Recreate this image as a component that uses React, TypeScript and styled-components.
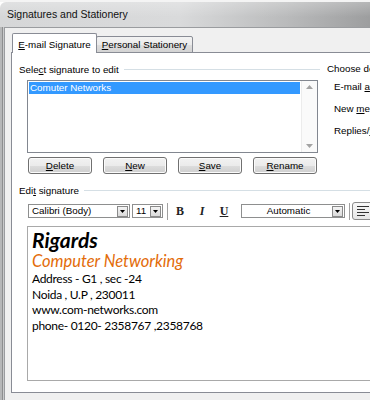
import React from 'react'
import styled, { createGlobalStyle } from 'styled-components'

const uiFont = `"Liberation Sans", Arial, sans-serif`
const docFont = `Lato, "Open Sans", sans-serif`
const serifFont = `"Liberation Serif", "DejaVu Serif", serif`

const GlobalStyle = createGlobalStyle`
  html, body {
    margin: 0;
    padding: 0;
  }
  body {
    width: 370px;
    height: 400px;
    overflow: hidden;
    background: #ffffff;
  }
  * {
    box-sizing: border-box;
  }
`

const Screen = styled.div`
  width: 370px;
  height: 400px;
  overflow: hidden;
  display: flex;
  flex-direction: column;
  font-family: ${uiFont};
  font-size: 9.8px;
  color: #000;
`

const Backdrop = styled.div`
  height: 2px;
  flex: none;
  background: #f4f4f4;
`

const Window = styled.div`
  flex: 1;
  width: 600px;
  display: flex;
  flex-direction: column;
`

const TitleBar = styled.div`
  height: 25px;
  flex: none;
  padding-left: 7px;
  line-height: 25px;
  font-size: 10.5px;
  color: #111;
  border-radius: 6px 0 0 0;
  background:
    linear-gradient(180deg, rgba(255, 255, 255, 0.25), rgba(255, 255, 255, 0) 60%),
    linear-gradient(90deg, #d6d7d8 0%, #d9dadb 30%, #b9babb 48%, #9c9d9e 62%, #939495 80%, #a9aaab 100%);
`

const FrameRow = styled.div`
  flex: 1;
  display: flex;
  background: #c4c5c6;
`

const SideFrame = styled.div`
  width: 4px;
  flex: none;
  background: linear-gradient(90deg, #b6b7b8 0, #b6b7b8 2px, #8d8e8f 2px, #8d8e8f 3px, #c9cacb 3px);
`

const Client = styled.div`
  flex: 1;
  display: flex;
  flex-direction: column;
  background: #f0f0f0;
  border-top: 1px solid #9a9c9f;
  border-left: 1px solid #9a9c9f;
  padding: 5px 0 7px 6px;
`

const TabStrip = styled.div`
  display: flex;
  align-items: flex-end;
  height: 20px;
  flex: none;
  position: relative;
  z-index: 1;
  margin-bottom: -1px;
  padding-left: 1px;
`

const Tab = styled.div<{ $active?: boolean; $width: number }>`
  width: ${(p) => p.$width}px;
  height: ${(p) => (p.$active ? 20 : 17)}px;
  margin-left: ${(p) => (p.$active ? 0 : -1)}px;
  border: 1px solid #898c95;
  border-bottom: ${(p) => (p.$active ? 'none' : '1px solid #898c95')};
  border-radius: 2px 2px 0 0;
  background: ${(p) =>
    p.$active ? '#ffffff' : 'linear-gradient(180deg, #f3f3f3, #ebebeb 50%, #dedede 51%, #d3d3d3)'};
  text-align: center;
  line-height: ${(p) => (p.$active ? 22 : 16)}px;
  white-space: nowrap;
`

const Panel = styled.div`
  flex: 1;
  display: flex;
  flex-direction: column;
  background: #ffffff;
  border: 1px solid #898c95;
  padding: 9px 0 0 7px;
`

const TopSection = styled.div`
  display: flex;
  gap: 7px;
`

const LeftCol = styled.div`
  width: 301px;
  flex: none;
`

const GroupHeader = styled.div`
  display: flex;
  align-items: center;
  height: 14px;
  white-space: nowrap;

  &::after {
    content: '';
    flex: 1;
    height: 1px;
    margin-left: 5px;
    background: #d5dfe5;
  }
`

const Key = styled.span`
  text-decoration: underline;
`

const ListBox = styled.div`
  display: flex;
  width: 291px;
  height: 73px;
  margin: 4px 0 0 8px;
  border: 1px solid #828790;
  background: #fff;
`

const ListItems = styled.div`
  flex: 1;
  padding: 1px 1px 0 1px;
`

const ListItem = styled.div<{ $selected?: boolean }>`
  height: 12px;
  line-height: 12px;
  padding-left: 1px;
  white-space: nowrap;
  background: ${(p) => (p.$selected ? '#3399ff' : 'transparent')};
  color: ${(p) => (p.$selected ? '#ffffff' : '#000')};
`

const ScrollBar = styled.div`
  width: 16px;
  flex: none;
  display: flex;
  flex-direction: column;
  justify-content: space-between;
  align-items: center;
  padding: 4px 0 4px;
  background: #fafafa;
  border-left: 1px solid #ececec;
`

const ButtonRow = styled.div`
  display: flex;
  gap: 11px;
  margin: 4px 0 0 9px;
`

const PushButton = styled.button`
  width: 64px;
  height: 17px;
  padding: 0;
  border: 1px solid #707070;
  border-radius: 3px;
  background: linear-gradient(180deg, #f2f2f2, #ebebeb 50%, #dddddd 51%, #cfcfcf);
  box-shadow: inset 0 0 0 1px #fbfbfb;
  font-family: ${uiFont};
  font-size: 9.8px;
  line-height: 14px;
  color: #000;
`

const RightCol = styled.div`
  flex: 1;
  white-space: nowrap;
`

const RightHeading = styled.div`
  height: 14px;
  line-height: 14px;
`

const RightRow = styled.div<{ $first?: boolean }>`
  height: 14px;
  line-height: 14px;
  padding-left: 7px;
  margin-top: ${(p) => (p.$first ? 4 : 8)}px;
`

const EditSection = styled.div`
  margin-top: 9px;
  display: flex;
  flex-direction: column;
`

const Toolbar = styled.div`
  display: flex;
  align-items: center;
  height: 18px;
  margin: 5px 0 0 9px;
`

const Combo = styled.div<{ $width: number; $gap?: number }>`
  width: ${(p) => p.$width}px;
  height: 14px;
  margin-left: ${(p) => p.$gap ?? 0}px;
  flex: none;
  display: flex;
  align-items: center;
  border: 1px solid #8e8f8f;
  background: #fff;
  padding-left: 3px;
  font-size: 9.8px;
  white-space: nowrap;
`

const ComboText = styled.span<{ $center?: boolean }>`
  flex: 1;
  text-align: ${(p) => (p.$center ? 'center' : 'left')};
  line-height: 12px;
`

const DropButton = styled.span`
  width: 11px;
  height: 11px;
  margin-right: 1px;
  flex: none;
  display: flex;
  align-items: center;
  justify-content: center;
  border: 1px solid #8a8a8a;
  background: linear-gradient(180deg, #f4f4f4, #dadada);
`

const Separator = styled.span<{ $gap: number }>`
  width: 2px;
  height: 17px;
  flex: none;
  margin-left: ${(p) => p.$gap}px;
  border-left: 1px solid #a0a0a0;
  border-right: 1px solid #ffffff;
`

const FormatButton = styled.span<{ $kind: 'b' | 'i' | 'u' }>`
  width: 22px;
  height: 18px;
  flex: none;
  text-align: center;
  line-height: 18px;
  font-family: ${serifFont};
  font-size: 12px;
  font-weight: bold;
  font-style: ${(p) => (p.$kind === 'i' ? 'italic' : 'normal')};
  text-decoration: ${(p) => (p.$kind === 'u' ? 'underline' : 'none')};
  color: #222;
`

const AlignButton = styled.span`
  width: 22px;
  height: 18px;
  flex: none;
  margin-left: 1px;
  display: flex;
  align-items: center;
  justify-content: center;
  border: 1px solid #8a8a8a;
  border-radius: 3px;
  background: linear-gradient(180deg, #f8f8f8, #e6e6e6);
`

const Editor = styled.div`
  height: 155px;
  margin: 6px 0 0 8px;
  border: 1px solid #a9a9a9;
  border-right: none;
  background: #ffffff;
  padding: 1px 4px;
  font-family: ${docFont};
  color: #000;
`

const SigName = styled.div`
  font-size: 21px;
  font-weight: bold;
  font-style: italic;
  line-height: 24px;
`

const SigCompany = styled.div`
  font-size: 16.5px;
  font-style: italic;
  color: #e36c0a;
  line-height: 19px;
`

const SigLine = styled.div`
  font-size: 12px;
  letter-spacing: -0.3px;
  line-height: 15.7px;
`

const Triangle = ({ up }: { up?: boolean }) => (
  <svg width="7" height="4" viewBox="0 0 7 4">
    <path d={up ? 'M0 4 L3.5 0 L7 4 Z' : 'M0 0 L7 0 L3.5 4 Z'} fill="#a3a3a3" />
  </svg>
)

const DropArrow = () => (
  <svg width="5" height="3" viewBox="0 0 5 3">
    <path d="M0 0 L5 0 L2.5 3 Z" fill="#000" />
  </svg>
)

const AlignLeftIcon = () => (
  <svg width="12" height="10" viewBox="0 0 12 10">
    <g stroke="#333" strokeWidth="1">
      <line x1="0" y1="0.5" x2="12" y2="0.5" />
      <line x1="0" y1="3.5" x2="8" y2="3.5" />
      <line x1="0" y1="6.5" x2="12" y2="6.5" />
      <line x1="0" y1="9.5" x2="8" y2="9.5" />
    </g>
  </svg>
)

const App: React.FC = () => {
  return (
    <Screen>
      <GlobalStyle />
      <Backdrop />
      <Window>
        <TitleBar>Signatures and Stationery</TitleBar>
        <FrameRow>
          <SideFrame />
          <Client>
            <TabStrip>
              <Tab $active $width={85}>
                <Key>E</Key>-mail Signature
              </Tab>
              <Tab $width={97}>
                <Key>P</Key>ersonal Stationery
              </Tab>
            </TabStrip>
            <Panel>
              <TopSection>
                <LeftCol>
                  <GroupHeader>
                    <span>
                      Sele<Key>c</Key>t signature to edit
                    </span>
                  </GroupHeader>
                  <ListBox>
                    <ListItems>
                      <ListItem $selected>Comuter Networks</ListItem>
                    </ListItems>
                    <ScrollBar>
                      <Triangle up />
                      <Triangle />
                    </ScrollBar>
                  </ListBox>
                  <ButtonRow>
                    <PushButton>
                      <Key>D</Key>elete
                    </PushButton>
                    <PushButton>
                      <Key>N</Key>ew
                    </PushButton>
                    <PushButton>
                      <Key>S</Key>ave
                    </PushButton>
                    <PushButton>
                      <Key>R</Key>ename
                    </PushButton>
                  </ButtonRow>
                </LeftCol>
                <RightCol>
                  <RightHeading>Choose default signature</RightHeading>
                  <RightRow $first>
                    E-mail <Key>a</Key>ccount:
                  </RightRow>
                  <RightRow>
                    New <Key>m</Key>essages:
                  </RightRow>
                  <RightRow>
                    Replies/<Key>f</Key>orwards:
                  </RightRow>
                </RightCol>
              </TopSection>
              <EditSection>
                <GroupHeader>
                  <span>
                    Edi<Key>t</Key> signature
                  </span>
                </GroupHeader>
                <Toolbar>
                  <Combo $width={102}>
                    <ComboText>Calibri (Body)</ComboText>
                    <DropButton>
                      <DropArrow />
                    </DropButton>
                  </Combo>
                  <Combo $width={31} $gap={2}>
                    <ComboText>11</ComboText>
                    <DropButton>
                      <DropArrow />
                    </DropButton>
                  </Combo>
                  <Separator $gap={4} />
                  <FormatButton $kind="b">B</FormatButton>
                  <FormatButton $kind="i">I</FormatButton>
                  <FormatButton $kind="u">U</FormatButton>
                  <Combo $width={104} $gap={6}>
                    <ComboText $center>Automatic</ComboText>
                    <DropButton>
                      <DropArrow />
                    </DropButton>
                  </Combo>
                  <Separator $gap={4} />
                  <AlignButton>
                    <AlignLeftIcon />
                  </AlignButton>
                </Toolbar>
                <Editor>
                  <SigName>Rigards</SigName>
                  <SigCompany>Computer Networking</SigCompany>
                  <SigLine>Address - G1 , sec -24</SigLine>
                  <SigLine>Noida , U.P , 230011</SigLine>
                  <SigLine>www.com-networks.com</SigLine>
                  <SigLine>phone- 0120- 2358767 ,2358768</SigLine>
                </Editor>
              </EditSection>
            </Panel>
          </Client>
        </FrameRow>
      </Window>
    </Screen>
  )
}

export default App
